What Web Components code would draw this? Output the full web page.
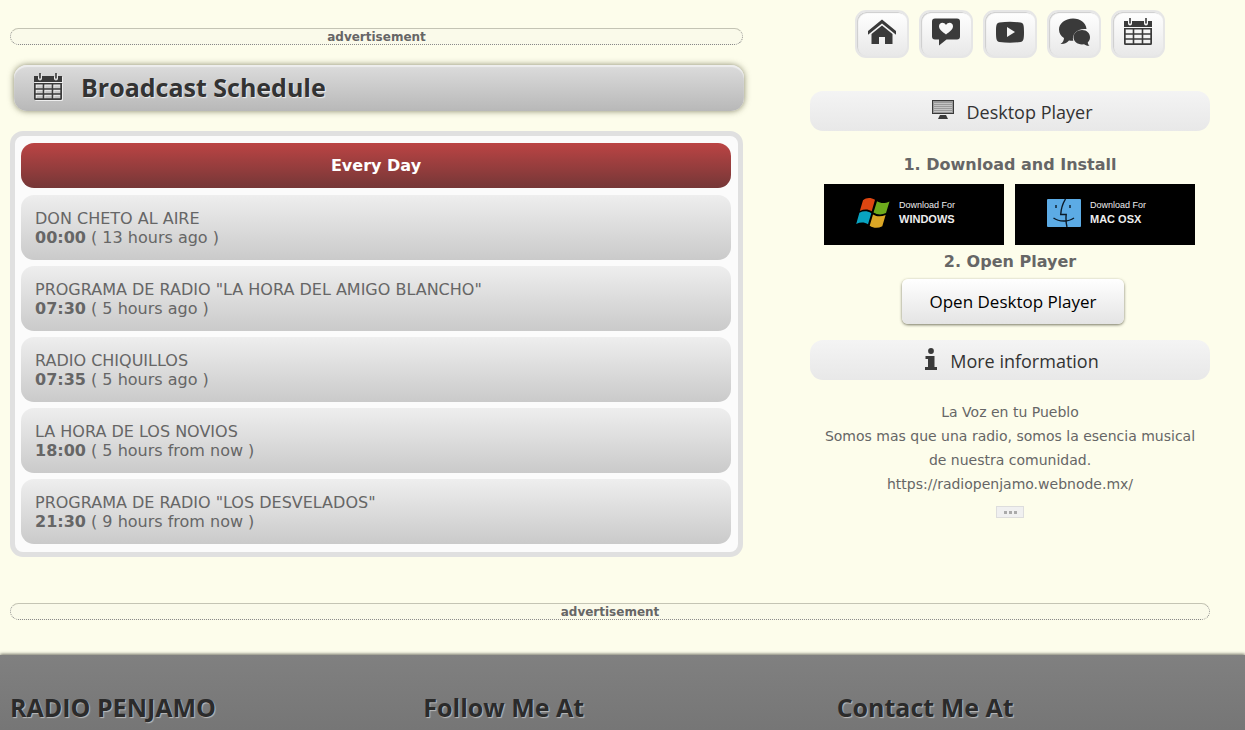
<!DOCTYPE html>
<html lang="es">
<head>
<meta charset="utf-8">
<title>Radio Penjamo</title>
<meta name="viewport" content="width=device-width, initial-scale=1">
<style>
  html { height: 100%; }
  body {
    margin: 0;
    min-height: 100%;
    display: flex;
    flex-direction: column;
    background: #fdfdeb;
    color: #666;
    font: 16px/19px "DejaVu Sans", Verdana, sans-serif;
    --display: "Open Sans", "Noto Sans", sans-serif;
    --ink: #3a3a3a;
  }
  radio-page { flex: 1; }
</style>
</head>
<body>
<radio-page></radio-page>
<script>
const ICONS = {
  calendar: `<svg viewBox="0 0 28 28"><path d="M0 3h4v2.500a2 2 0 0 0 4 0V3h12v2.500a2 2 0 0 0 4 0V3h4v6H0z"/><path d="M5.200 0h1.600v5.500H5.200zM21.200 0h1.600v5.500h-1.600z"/><path fill-rule="evenodd" d="M0 10h28v15.500a1.500 1.500 0 0 1-1.500 1.500h-25A1.500 1.500 0 0 1 0 25.500zM1.700 11.500v3.700h7V11.500zM10.300 11.500v3.700h7.400V11.500zM19.300 11.500v3.700h7V11.500zM1.700 16.700v3.500h7v-3.500zM10.300 16.700v3.500h7.400v-3.500zM19.300 16.700v3.500h7v-3.500zM1.700 21.700v3.600h7v-3.600zM10.300 21.700v3.600h7.400v-3.600zM19.300 21.700v3.600h7v-3.600z"/></svg>`,
  home: `<svg viewBox="0 0 28 28"><path d="M14 1.500 28 13v3.800L14 5.600 0 16.800V13z"/><path d="M14 7.600 24.500 16v10H17v-7h-6v7H3.500V16z"/></svg>`,
  love: `<svg viewBox="0 0 28 28"><path fill-rule="evenodd" d="M3 .5h22a3 3 0 0 1 3 3v15a3 3 0 0 1-3 3H14.500L7 27.500v-6H3a3 3 0 0 1-3-3v-15a3 3 0 0 1 3-3zM14 16.500c3-2.300 7-4.800 7-8.200 0-4-5-4.800-7-1.300-2-3.500-7-2.700-7 1.300 0 3.400 4 5.900 7 8.200z"/></svg>`,
  video: `<svg viewBox="0 0 28 28"><path fill-rule="evenodd" d="M3.500 4.500Q14 3.200 24.500 4.500C27.500 4.800 28 7 28 14s-.5 9.700-3.500 10Q14 25.300 3.500 24C.5 23.700 0 21 0 14s.5-9.200 3.500-9.500zM11 9v10l8-5z"/></svg>`,
  chat: `<svg viewBox="0 0 31 28"><path d="M14 .5C6 .5 0 5.500 0 11.500c0 4 2 6.500 5 8.500 0 2-1 4.500-3.500 6 4 .3 7-1.500 8.500-3.500 2 .3 3 .3 4.300.2C12.500 16.500 18 10 27.500 11 27 5 21.500.5 14 .5z"/><path d="M23 12c-5 0-8.500 3.300-8.500 7.200s3.500 7.200 8.500 7.200l2-.2c1.300 1 3 1.700 5.500 1.500-1.300-1-1.700-2.300-1.700-3.500 1.500-1.300 2.200-3 2.200-5C31 15.300 28 12 23 12z"/></svg>`,
  desktop: `<svg viewBox="0 0 22 20"><path d="M0 0h22v14H0z"/><path fill="#999" d="M1 1h20v12H1z"/><path fill="#c4c4c4" d="M2 3h18v1H2zM2 5h18v1H2zM2 7h18v1H2zM2 9h18v1H2zM2 11h18v1H2z"/><path d="M8 15h6l2 4H6z"/></svg>`,
  info: `<svg viewBox="0 0 12 22"><circle cx="6" cy="3" r="2.900"/><path d="M.5 8H9.500v11H12v3H0v-3h3v-8H.5z"/></svg>`,
  windows: `<svg viewBox="0 0 34 32"><path fill="#dd4611" d="M7 3.200C10.500.5 14.500.3 19 2.800l-3.300 11.400C11.800 12 8 12.200 3.800 14z"/><path fill="#6eaa1c" d="M21 4.300C25 6.700 29 6.500 33.500 4.500L30 16c-4 2-8.500 2-12.500-.5z"/><path fill="#08a3c1" d="M3.400 15.700c4.300-2 8-1.700 11.900.5L12 27.300C8.500 25 4.300 25 .2 27z"/><path fill="#dba625" d="M17 17.400c4 2.400 8.300 2.300 12.600.5l-3.300 11.300c-4.300 2.200-8.500 2.200-12.600-.5z"/></svg>`,
  mac: `<svg viewBox="0 0 34 28"><rect width="34" height="28" rx="1" fill="#5cabe5"/><g fill="none" stroke="#0b1a28" stroke-width="1.400"><path d="M18.500 0C15.500 5 14 10 13.700 15.500h5.500C18.800 19.500 19 24 20 28M6.500 19c5.500 4 15 4 20.500 0M9 6v3M23 6v3"/></g></svg>`
};

function define(name, css, html) {
  const template = document.createElement('template');
  customElements.define(name, class extends HTMLElement {
    connectedCallback() {
      if (this.shadowRoot) return;
      template.innerHTML = `<style>${css}</style>${typeof html === 'function' ? html(this) : html}`;
      this.attachShadow({ mode: 'open' }).append(template.content.cloneNode(true));
    }
  });
}

define('ui-icon', `
  :host { display: inline-block; width: 28px; height: 28px; color: var(--ink); }
  svg { display: block; width: 100%; height: 100%; fill: currentColor; }
`, el => ICONS[el.getAttribute('name')]);

define('ad-strip', `
  :host { display: block; }
  div {
    border: 1px dotted #888; border-top-color: #c4c4b4; border-top-style: solid; border-radius: 9px;
    background: #fafaea; text-align: center; font-weight: bold; font-size: 12px; line-height: 14px; padding-top: 1px;
  }
`, `<div><slot></slot></div>`);

define('page-title', `
  :host { display: block; }
  h2 {
    margin: 0; display: flex; align-items: center; gap: 19px; height: 46px; padding: 0 20px 3px;
    box-sizing: border-box; border-radius: 13px;
    background: linear-gradient(#dcdcdc, #b8b8b8);
    box-shadow: 0 0 6px rgba(70, 70, 40, .65), inset 0 2px 1px #eee;
    font: bold 25px/36px var(--display); color: #333; text-shadow: 1px 1px 1px #eee;
  }
  ui-icon { filter: drop-shadow(1px 1px 0 #eee); }
`, `<h2><ui-icon name="calendar"></ui-icon><slot></slot></h2>`);

define('schedule-entry', `
  :host { display: block; }
  article {
    padding: 14px 14px 13px; border-radius: 13px;
    background: linear-gradient(#eee, #cacaca);
  }
`, el => `<article><div>${el.getAttribute('show')}</div><div><b>${el.getAttribute('time')}</b> ( <slot></slot> )</div></article>`);

define('schedule-card', `
  :host { display: block; }
  section {
    border: 5px solid #e0e0e0; border-radius: 13px; background: #fbfbfb;
    padding: 7px 7px 8px 6px; display: flex; flex-direction: column; gap: 6px;
  }
  h3 {
    margin: 0 0 1px; padding-top: 1px; border-radius: 13px; text-align: center; color: #fff;
    background: linear-gradient(#bb4444, #753737); font-size: 16px; line-height: 44px;
  }
`, el => `<section><h3>${el.getAttribute('day')}</h3><slot></slot></section>`);

define('nav-button', `
  :host { display: block; }
  button {
    display: flex; justify-content: center; align-items: flex-start;
    width: 54px; height: 48px; padding: 6px 0 0; margin: 0;
    border: 2px solid #e6e6e6; border-radius: 11px;
    background: linear-gradient(#fff, #e8e8e8);
    box-shadow: inset 1px 1px 1px #ccc; cursor: pointer;
  }
  ui-icon[name=chat] { width: 31px; }
`, el => `<button type="button" aria-label="${el.getAttribute('label')}"><ui-icon name="${el.getAttribute('icon')}"></ui-icon></button>`);

define('section-bar', `
  :host { display: block; }
  h3 {
    margin: 0; display: flex; justify-content: center; align-items: flex-start; gap: 13px;
    height: 40px; box-sizing: border-box; padding: 1px 0 0 4px;
    border-radius: 13px; background: linear-gradient(#f4f4f4, #e8e8e8);
    font: 18px/40px var(--display); color: #333;
  }
  ui-icon[name=desktop] { width: 22px; height: 20px; margin-top: 8px; }
  ui-icon[name=info] { width: 12px; height: 22px; margin-top: 7px; }
`, el => `<h3><ui-icon name="${el.getAttribute('icon')}"></ui-icon><span><slot></slot></span></h3>`);

define('download-link', `
  :host { display: block; }
  a {
    display: flex; align-items: center; gap: 9px; width: 180px; height: 61px; padding: 0 0 3px 32px;
    box-sizing: border-box; background: #000; color: #eee; text-decoration: none;
    font: bold 11px/16px "Liberation Sans", Arial, sans-serif;
  }
  ui-icon { width: 34px; height: 32px; }
  ui-icon[name=mac] { height: 28px; }
  small, b { display: block; }
  small { font-size: 9px; line-height: 12px; font-weight: normal; }
`, el => `<a href="#"><ui-icon name="${el.getAttribute('icon')}"></ui-icon><span><small>Download For</small><b><slot></slot></b></span></a>`);

define('player-panel', `
  :host { display: block; }
  nav { display: flex; justify-content: center; gap: 10px; margin-bottom: 33px; }
  h4 { margin: 0; font-size: 16px; line-height: 20px; text-align: center; }
  .install { margin-top: 24px; }
  .downloads { display: flex; justify-content: center; gap: 11px; margin: 9px 1px 7px 0; }
  .open {
    display: block; margin: 7px auto 16px; padding: 1px 27px 0; height: 45px; border: 0; border-radius: 6px;
    background: linear-gradient(#fff, #e4e4e4); box-shadow: 0 1px 3px rgba(60, 60, 40, .7);
    font: 17px/44px var(--display); color: #000; cursor: pointer; translate: 3px 0;
  }
  p { margin: 20px 0 10px; padding: 0 8px; text-align: center; font-size: 14px; line-height: 24px; }
  .more {
    display: flex; justify-content: center; align-items: center; gap: 2px; width: 28px; height: 12px;
    margin: 0 auto; padding: 0; border: 1px solid #ddd; background: #f0f0f0; cursor: pointer;
  }
  .more i { width: 3px; height: 3px; background: #aaa; }
`, `
  <nav>
    <nav-button icon="home" label="Home"></nav-button>
    <nav-button icon="love" label="Dedications"></nav-button>
    <nav-button icon="video" label="Videos"></nav-button>
    <nav-button icon="chat" label="Chat"></nav-button>
    <nav-button icon="calendar" label="Schedule"></nav-button>
  </nav>
  <section-bar icon="desktop">Desktop Player</section-bar>
  <h4 class="install">1. Download and Install</h4>
  <div class="downloads">
    <download-link icon="windows">WINDOWS</download-link>
    <download-link icon="mac">MAC OSX</download-link>
  </div>
  <h4>2. Open Player</h4>
  <button class="open" type="button">Open Desktop Player</button>
  <section-bar icon="info">More information</section-bar>
  <p>La Voz en tu Pueblo<br>Somos mas que una radio, somos la esencia musical de nuestra comunidad.<br>https://radiopenjamo.webnode.mx/</p>
  <button class="more" type="button" aria-label="More"><i></i><i></i><i></i></button>
`);

define('page-footer', `
  :host { display: block; }
  footer {
    display: grid; grid-template-columns: repeat(3, 1fr); gap: 40px; box-sizing: border-box;
    height: 100%; padding: 34px 35px 5px 10px;
    background: linear-gradient(#808080, #767676);
    box-shadow: 0 -1px 3px rgba(80, 80, 70, .8);
  }
  h2 { margin: 0; font: bold 25px/36px var(--display); color: #2b2b2b; text-shadow: 1px 1px 1px #bbb; }
`, `<footer><h2>RADIO PENJAMO</h2><h2>Follow Me At</h2><h2>Contact Me At</h2></footer>`);

define('radio-page', `
  :host { display: flex; flex-direction: column; }
  main { display: grid; grid-template-columns: 1fr 400px; column-gap: 67px; padding: 0 35px 35px 10px; }
  .schedule { padding-top: 28px; }
  page-title { margin: 20px -1px 20px 4px; }
  player-panel { padding-top: 10px; }
  .wide { grid-column: 1 / -1; margin-top: 46px; }
  page-footer { flex: 1; }
`, `
  <main>
    <div class="schedule">
      <ad-strip>advertisement</ad-strip>
      <page-title>Broadcast Schedule</page-title>
      <schedule-card day="Every Day">
        <schedule-entry show="DON CHETO AL AIRE" time="00:00">13 hours ago</schedule-entry>
        <schedule-entry show='PROGRAMA DE RADIO "LA HORA DEL AMIGO BLANCHO"' time="07:30">5 hours ago</schedule-entry>
        <schedule-entry show="RADIO CHIQUILLOS" time="07:35">5 hours ago</schedule-entry>
        <schedule-entry show="LA HORA DE LOS NOVIOS" time="18:00">5 hours from now</schedule-entry>
        <schedule-entry show='PROGRAMA DE RADIO "LOS DESVELADOS"' time="21:30">9 hours from now</schedule-entry>
      </schedule-card>
    </div>
    <player-panel></player-panel>
    <ad-strip class="wide">advertisement</ad-strip>
  </main>
  <page-footer></page-footer>
`);
</script>
</body>
</html>
